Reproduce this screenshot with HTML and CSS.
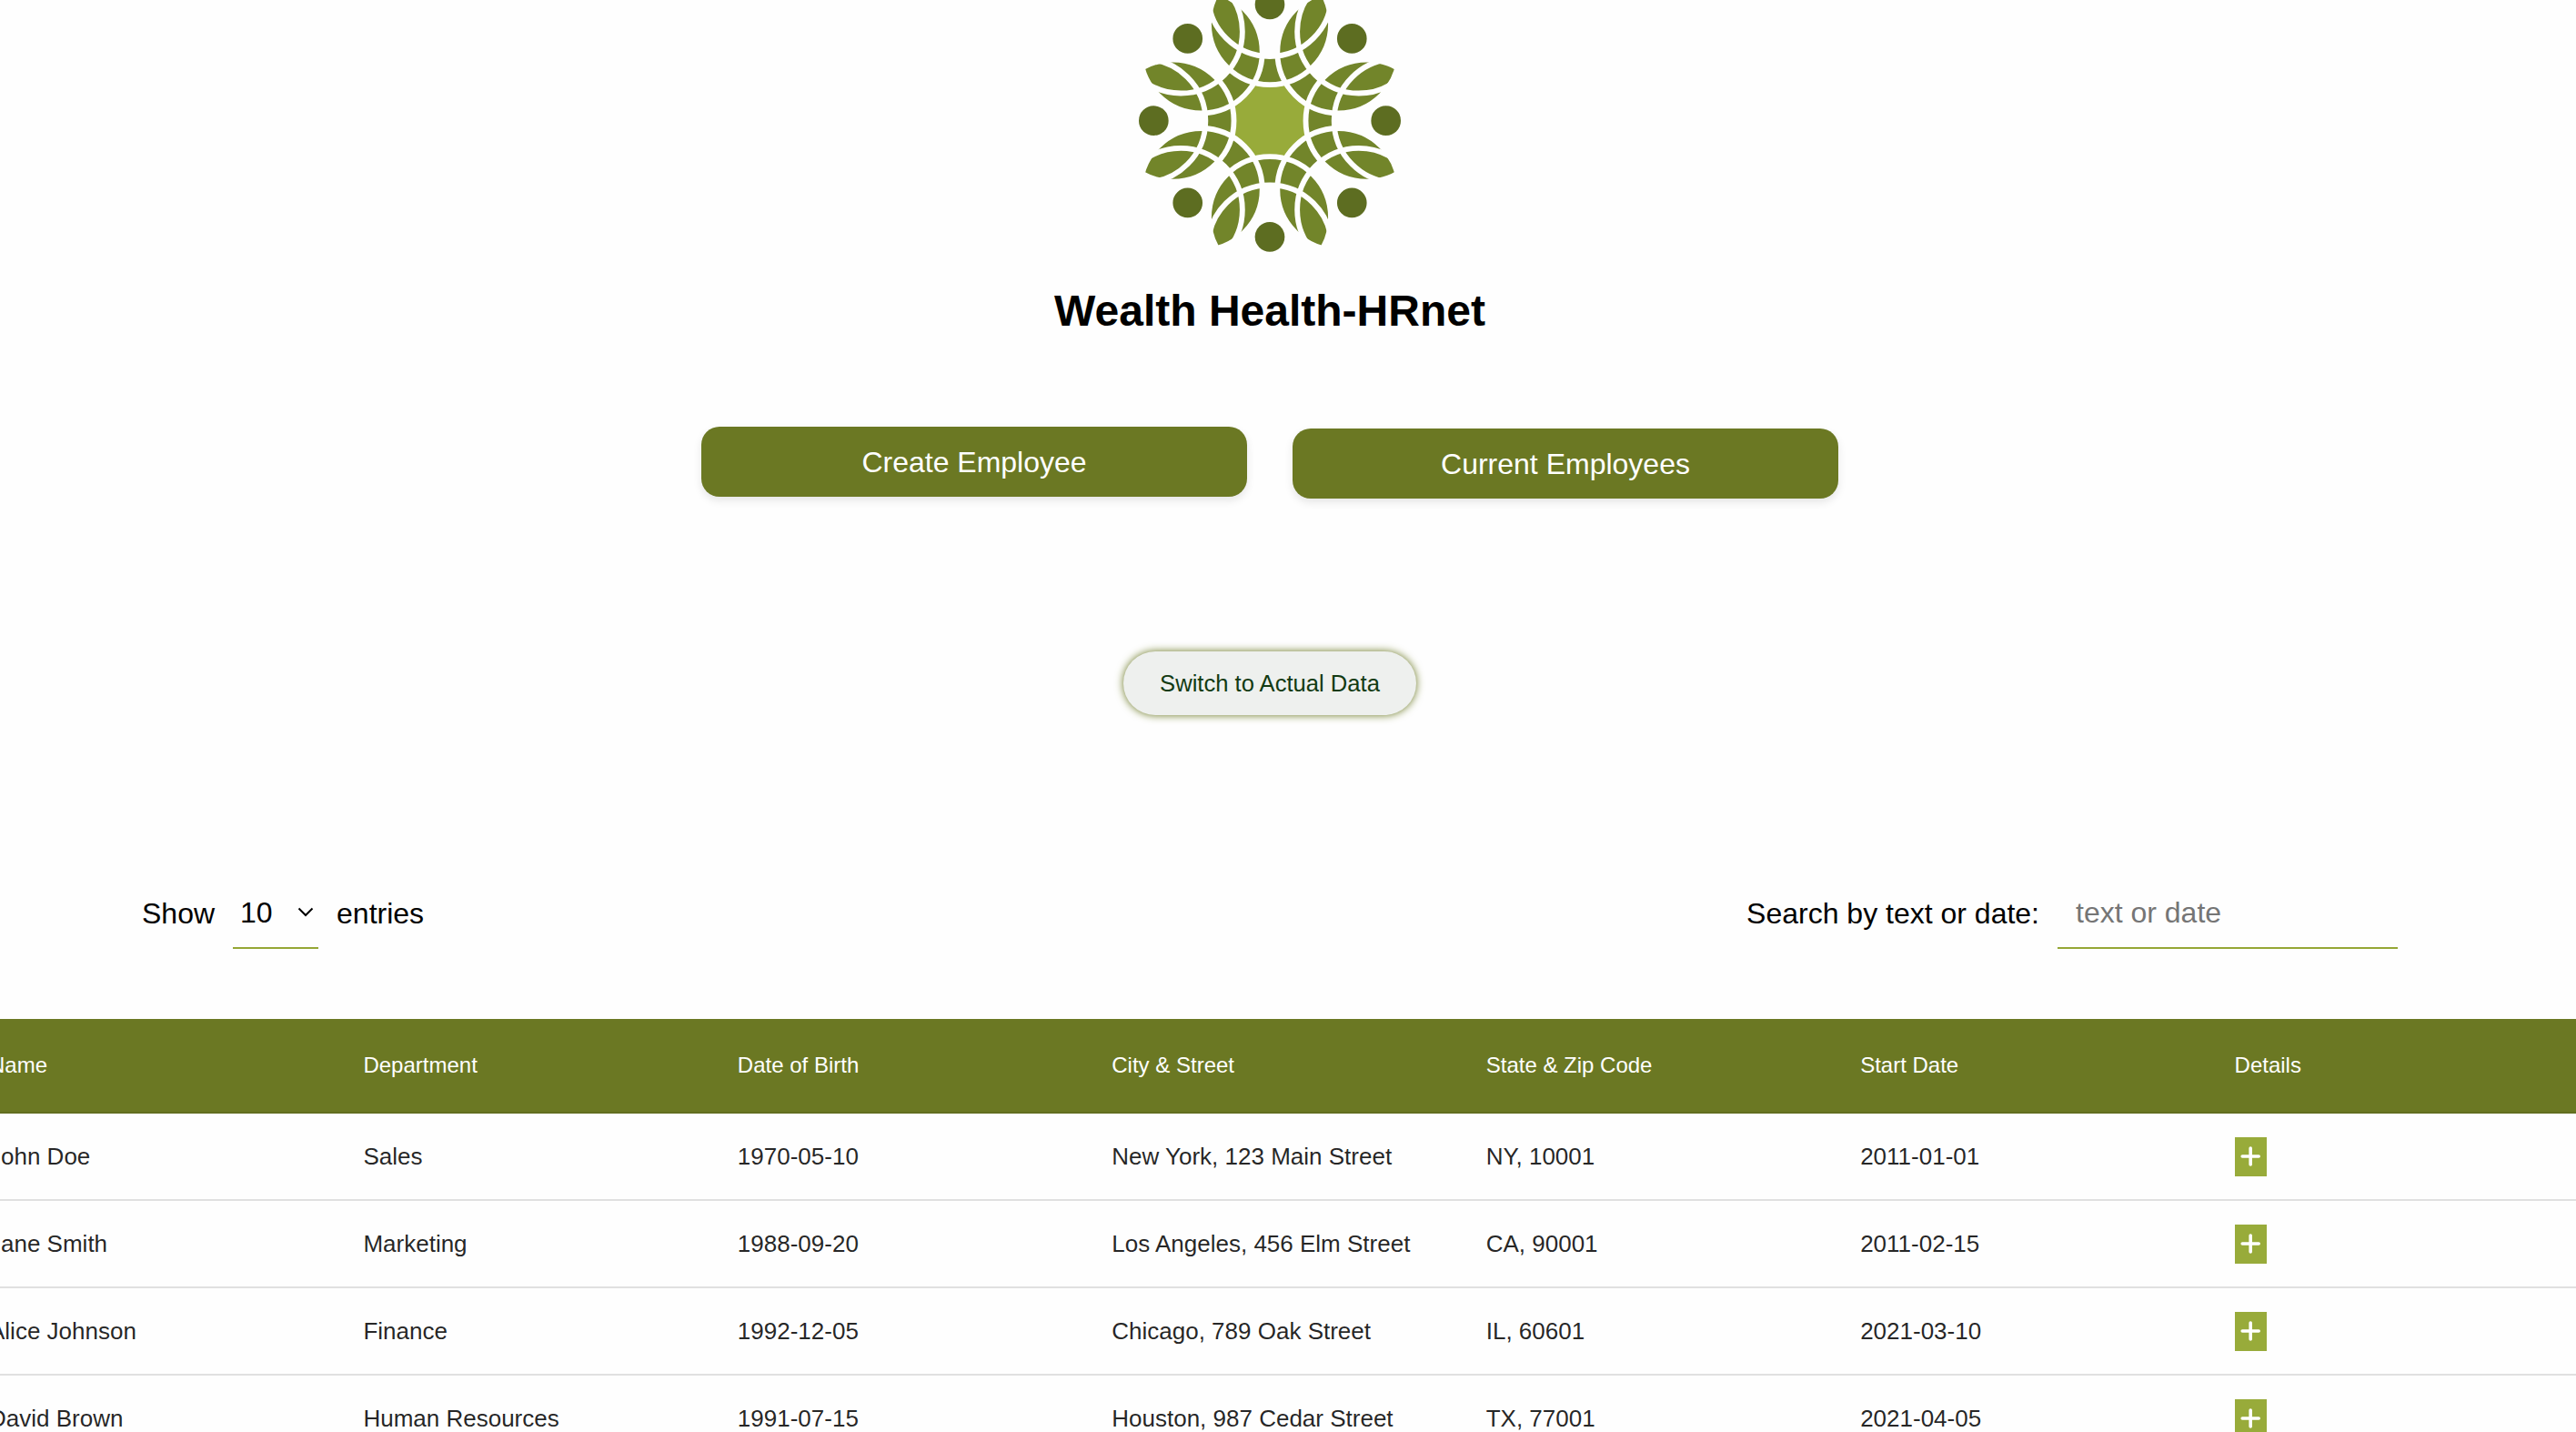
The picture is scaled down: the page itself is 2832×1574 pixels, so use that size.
FILE: index.html
```html
<!DOCTYPE html>
<html lang="en">
<head>
<meta charset="utf-8">
<title>Wealth Health-HRnet</title>
<link rel="stylesheet" href="styles.css">
</head>
<body>
<main class="page">
  <header class="hero">
    <svg class="logo" viewBox="-450 -398 900 870" role="img" aria-label="Wealth Health">
      <defs>
        <circle id="inner" cx="319.5" cy="0" r="201"/>
        <circle id="outer" cx="415" cy="0" r="203"/>
        <circle id="dot" cx="383" cy="0" r="49"/>
        <path id="lens" d="M135.7 0A201 201 0 0 1 454.7 0A201 201 0 0 1 135.7 0Z"/>
        <g id="inners"><use href="#inner"/><use href="#inner" transform="rotate(45)"/><use href="#inner" transform="rotate(90)"/><use href="#inner" transform="rotate(135)"/><use href="#inner" transform="rotate(180)"/><use href="#inner" transform="rotate(225)"/><use href="#inner" transform="rotate(270)"/><use href="#inner" transform="rotate(315)"/></g>
        <g id="outers"><use href="#outer"/><use href="#outer" transform="rotate(45)"/><use href="#outer" transform="rotate(90)"/><use href="#outer" transform="rotate(135)"/><use href="#outer" transform="rotate(180)"/><use href="#outer" transform="rotate(225)"/><use href="#outer" transform="rotate(270)"/><use href="#outer" transform="rotate(315)"/></g>
      </defs>
      <circle class="logo-core" r="150"/>
      <use class="logo-leaf" href="#inners"/>
      <use class="logo-gap" href="#outers"/>
      <g class="logo-leaf" transform="rotate(22.5)"><use href="#lens"/><use href="#lens" transform="rotate(45)"/><use href="#lens" transform="rotate(90)"/><use href="#lens" transform="rotate(135)"/><use href="#lens" transform="rotate(180)"/><use href="#lens" transform="rotate(225)"/><use href="#lens" transform="rotate(270)"/><use href="#lens" transform="rotate(315)"/></g>
      <use class="logo-line" href="#inners"/>
      <use class="logo-line" href="#outers"/>
      <g class="logo-dot"><use href="#dot"/><use href="#dot" transform="rotate(45)"/><use href="#dot" transform="rotate(90)"/><use href="#dot" transform="rotate(135)"/><use href="#dot" transform="rotate(180)"/><use href="#dot" transform="rotate(225)"/><use href="#dot" transform="rotate(270)"/><use href="#dot" transform="rotate(315)"/></g>
    </svg>
    <h1 class="title">Wealth Health-HRnet</h1>
    <nav class="nav">
      <a class="nav-link">Create Employee</a>
      <a class="nav-link nav-link-active">Current Employees</a>
    </nav>
    <button class="switch">Switch to Actual Data</button>
  </header>

  <section class="controls">
    <div class="control">
      <span>Show</span>
      <div class="select"><span>10</span><svg class="chevron" viewBox="0 0 18 12"><path d="M1.5 1.5L9 9L16.5 1.5"/></svg></div>
      <span>entries</span>
    </div>
    <label class="control">
      <span>Search by text or date:</span>
      <input class="search" type="text" placeholder="text or date">
    </label>
  </section>

  <div class="table">
    <div class="row head"><span>Name</span><span>Department</span><span>Date of Birth</span><span>City &amp; Street</span><span>State &amp; Zip Code</span><span>Start Date</span><span>Details</span></div>
    <div class="row"><span>John Doe</span><span>Sales</span><span>1970-05-10</span><span>New York, 123 Main Street</span><span>NY, 10001</span><span>2011-01-01</span><button class="plus" aria-label="Details"><svg viewBox="0 0 35 43"><path d="M8.2 21H26.2M17.2 12V30"/></svg></button></div>
    <div class="row"><span>Jane Smith</span><span>Marketing</span><span>1988-09-20</span><span>Los Angeles, 456 Elm Street</span><span>CA, 90001</span><span>2011-02-15</span><button class="plus" aria-label="Details"><svg viewBox="0 0 35 43"><path d="M8.2 21H26.2M17.2 12V30"/></svg></button></div>
    <div class="row"><span>Alice Johnson</span><span>Finance</span><span>1992-12-05</span><span>Chicago, 789 Oak Street</span><span>IL, 60601</span><span>2021-03-10</span><button class="plus" aria-label="Details"><svg viewBox="0 0 35 43"><path d="M8.2 21H26.2M17.2 12V30"/></svg></button></div>
    <div class="row"><span>David Brown</span><span>Human Resources</span><span>1991-07-15</span><span>Houston, 987 Cedar Street</span><span>TX, 77001</span><span>2021-04-05</span><button class="plus" aria-label="Details"><svg viewBox="0 0 35 43"><path d="M8.2 21H26.2M17.2 12V30"/></svg></button></div>
  </div>
</main>
</body>
</html>
```
FILE: styles.css
```css
* { box-sizing: border-box; }

body {
  margin: 0;
  height: 1574px;
  overflow: hidden;
  background: #fefefe;
  color: #000;
  font-family: "Liberation Sans", Helvetica, Arial, sans-serif;
}

.page { width: 2792px; }

.hero {
  display: flex;
  flex-direction: column;
  align-items: center;
}

.logo { display: block; width: 300px; height: 290px; }
.logo-core { fill: #98ab3a; }
.logo-leaf { fill: #72852a; }
.logo-gap { fill: #fefefe; }
.logo-line { fill: none; stroke: #fefefe; stroke-width: 17.5px; }
.logo-dot { fill: #5d6d21; }

.title {
  margin: 23px 0 98px;
  font-size: 48px;
  line-height: 58px;
  font-weight: 700;
}

.nav { display: flex; gap: 50px; align-items: flex-start; }

.nav-link {
  width: 600px;
  height: 77px;
  border-radius: 20px;
  background: #6b7823;
  color: #fff;
  font-size: 32px;
  line-height: 79px;
  text-align: center;
  box-shadow: 0 4px 10px rgba(0, 0, 0, 0.1);
}

.nav-link-active { margin-top: 2px; }

.switch {
  width: 322px;
  height: 70px;
  margin-top: 168px;
  padding: 0;
  border: 0;
  border-radius: 40px;
  background: #eef0ee;
  color: #133b13;
  font: 25.6px/70px "Liberation Sans", Helvetica, Arial, sans-serif;
  box-shadow: 0 0 10px #6b7823;
}

.controls {
  display: flex;
  justify-content: space-between;
  align-items: flex-start;
  margin-top: 177px;
  padding: 0 156px;
  height: 80px;
  font-size: 32px;
  line-height: 82px;
}

.control { display: flex; align-items: flex-start; gap: 20px; }

.select {
  display: flex;
  align-items: center;
  gap: 27px;
  width: 94px;
  height: 80px;
  padding: 2px 0 0 8px;
  border-bottom: 2px solid #95a735;
}

.chevron {
  width: 18px;
  height: 12px;
  fill: none;
  stroke: #000;
  stroke-width: 2px;
}

.search {
  width: 374px;
  height: 80px;
  padding: 2px 20px 0;
  border: 0;
  border-bottom: 2px solid #95a735;
  background: transparent;
  font: 32px "Liberation Sans", Helvetica, Arial, sans-serif;
}

.search::placeholder { color: #757575; opacity: 1; }

.table { width: 2880px; margin: 77px 0 0 -44px; }

.row {
  display: grid;
  grid-template-columns: repeat(7, 1fr);
  align-items: center;
  height: 96px;
  border-bottom: 2px solid #e0e0e0;
  color: rgba(0, 0, 0, 0.87);
  font-size: 26px;
}

.row > span { padding-left: 32px; }

.head {
  height: 104px;
  border-color: #626e20;
  background: #6b7823;
  color: #fff;
  font-size: 24px;
}

.plus {
  width: 35px;
  height: 43px;
  margin-left: 32px;
  padding: 0;
  border: 0;
  background: #98ab3a;
}

.plus svg {
  display: block;
  width: 35px;
  height: 43px;
  fill: none;
  stroke: #fff;
  stroke-width: 3.6px;
  stroke-linecap: round;
}
```
